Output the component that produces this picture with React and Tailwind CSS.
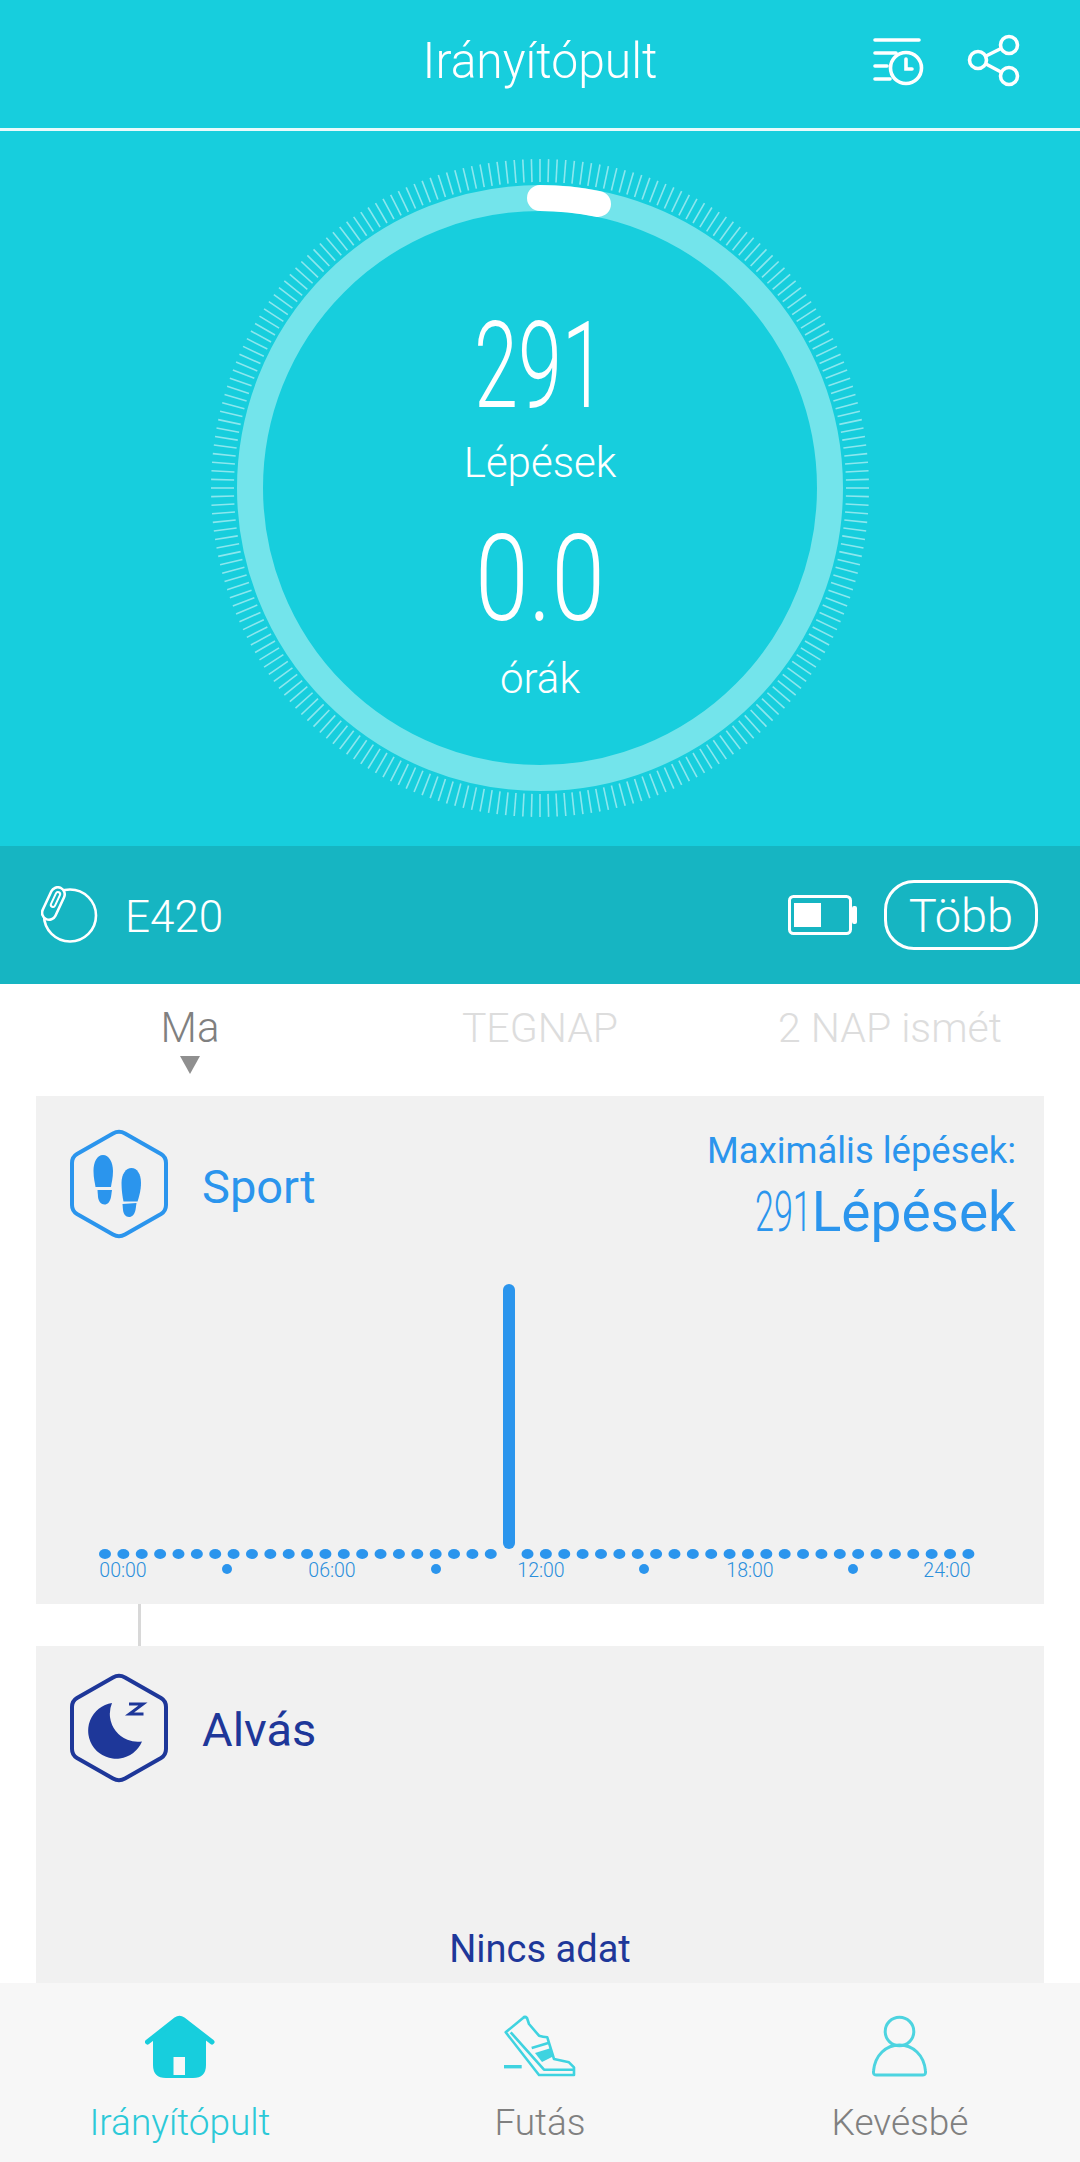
const ticks = Array.from({ length: 240 }, (_, i) => i * 1.5);
const dots = Array.from({ length: 48 }, (_, i) => i).filter((i) => i !== 22);
const hourDots = [227, 436, 644, 853];
const hourLabels = [
  ["00:00", 123],
  ["06:00", 332],
  ["12:00", 541],
  ["18:00", 750],
  ["24:00", 947],
];

const hexPath =
  "M43 4.5Q49 1 55 4.5L91 25Q96 28 96 34V76Q96 82 91 85L55 105.5Q49 109 43 105.5L7 85Q2 82 2 76V34Q2 28 7 25Z";

function Ring() {
  return (
    <svg width="660" height="660" viewBox="-330 -330 660 660" className="[grid-area:1/1]">
      {ticks.map((a) => (
        <line
          key={a}
          x1="0"
          y1="-306"
          x2="0"
          y2="-329"
          stroke="#ffffff"
          strokeOpacity="0.5"
          strokeWidth="1.6"
          transform={`rotate(${a})`}
        />
      ))}
      <circle r="290" fill="none" stroke="#73e4eb" strokeWidth="26" />
      <path
        d="M 0 -290 A 290 290 0 0 1 58 -284"
        fill="none"
        stroke="#ffffff"
        strokeWidth="26"
        strokeLinecap="round"
      />
    </svg>
  );
}

function HistoryIcon() {
  return (
    <svg width="52" height="52" viewBox="0 0 52 52" fill="none" stroke="#fff" strokeWidth="3.6" strokeLinecap="round">
      <path d="M2 5H46M2 18H23M2 31H14M2 44H17" />
      <circle cx="33" cy="33" r="15.5" />
      <path d="M33 24V34H39" />
    </svg>
  );
}

function ShareIcon() {
  return (
    <svg width="54" height="56" viewBox="0 0 54 56" fill="none" stroke="#fff" strokeWidth="3.6">
      <circle cx="43" cy="12" r="8.5" />
      <circle cx="12" cy="27" r="8.5" />
      <circle cx="43" cy="43" r="8.5" />
      <path d="M20 23L35 15.5M20 31L35 39" />
    </svg>
  );
}

function DeviceIcon() {
  return (
    <svg width="58" height="58" viewBox="0 0 58 58" fill="none" stroke="#fff" strokeWidth="2.6">
      <circle cx="29" cy="29.5" r="26" />
      <g transform="rotate(25 12.4 17.5)">
        <rect x="5.4" y="0.3" width="14" height="34.4" rx="7" fill="#16b5c2" />
        <rect x="10.4" y="5" width="4.4" height="16" rx="2.2" strokeWidth="2" />
      </g>
    </svg>
  );
}

function BatteryIcon() {
  return (
    <svg width="70" height="40" viewBox="0 0 70 40" fill="none">
      <rect x="1.5" y="1.5" width="61" height="37" rx="4" stroke="#fff" strokeWidth="3" />
      <rect x="6" y="8" width="27" height="24" fill="#fff" />
      <rect x="64" y="11" width="5" height="18" rx="2" fill="#fff" />
    </svg>
  );
}

function FeetIcon() {
  return (
    <svg width="98" height="110" viewBox="0 0 98 110" fill="none">
      <path d={hexPath} stroke="#2b95ed" strokeWidth="4" />
      <g fill="#2b95ed">
        <path d="M33 26C39 26 43 33 43 42C43 49 41.5 54 41 58H25.5C25 54 23.5 49 23.5 42C23.5 33 27 26 33 26Z" />
        <path d="M27.5 61H42L41 68C40 73 37.5 75.5 34.5 75.5C31 75.5 28.5 72.5 28 68Z" />
        <path d="M61.5 39C67 39 71 45 71 54C71 61 69 68 67.5 72.5H53.5C52.5 68 51.5 61 51.5 54C51.5 45 56 39 61.5 39Z" />
        <path d="M52.5 75L66.5 74L65.5 81C64.5 85.5 62 88 59 88C55.5 88 53.5 85 53 81Z" />
      </g>
    </svg>
  );
}

function MoonIcon() {
  return (
    <svg width="98" height="110" viewBox="0 0 98 110" fill="none">
      <path d={hexPath} stroke="#1e3799" strokeWidth="4" />
      <path d="M42 30A28 28 0 1 0 72 68.5A28 28 0 0 1 42 30Z" fill="#1e3799" />
      <path d="M59 31H73L59.5 41H73.5" stroke="#1e3799" strokeWidth="3" />
    </svg>
  );
}

function HomeIcon() {
  return (
    <svg width="70" height="64" viewBox="0 0 70 64" fill="none">
      <path
        fillRule="evenodd"
        fill="#17cedd"
        d="M8 24L34.5 4L61 24V50Q61 63 48 63H21Q8 63 8 50ZM28.5 42V60H40V42Z"
      />
      <path d="M2.5 27L31 4.5Q34.5 2 38 4.5L67 27" stroke="#17cedd" strokeWidth="5" strokeLinecap="round" />
    </svg>
  );
}

function ShoeIcon() {
  return (
    <svg width="72" height="64" viewBox="0 0 72 64" fill="none" stroke="#3fd3e0" strokeWidth="2.6" strokeLinejoin="round">
      <path d="M19 3Q21 1 23 3L25 9L35 20.7Q39 22 43.3 22.3L50 44L65 47.3L70 52.3V60H35L1.7 17.3Z" />
      <path d="M6.7 17.3L40 54.7H69" />
      <path d="M27.7 33L44.3 28" />
      <path d="M31 38L47 33L50 41L38 47Z" fill="#3fd3e0" stroke="none" />
      <path d="M0 51.7H17.7" strokeWidth="3.4" />
    </svg>
  );
}

function PersonIcon() {
  return (
    <svg width="58" height="64" viewBox="0 0 58 64" fill="none" stroke="#4dd4e0" strokeWidth="3">
      <circle cx="28.5" cy="16.5" r="14.3" />
      <path d="M5 60Q2 60 2.5 56C4 40 15 30 28.5 30C42 30 53 40 54.5 56Q55 60 52 60Z" />
    </svg>
  );
}

function SportChart() {
  return (
    <svg width="1008" height="370" viewBox="36 1234 1008 370" className="block">
      {dots.map((i) => (
        <ellipse key={i} cx={105 + i * 18.37} cy="1554" rx="6" ry="5" fill="#2b95ed" />
      ))}
      <rect x="503" y="1284" width="12" height="265" rx="6" fill="#2b95ed" />
      {hourDots.map((x) => (
        <circle key={x} cx={x} cy="1569" r="5" fill="#2b95ed" />
      ))}
      {hourLabels.map(([label, x]) => (
        <text key={label} x={x} y="1577" textAnchor="middle" fontSize="19.5" fontWeight="300" fill="#2b8fdc" fontFamily="Roboto, sans-serif">
          {label}
        </text>
      ))}
    </svg>
  );
}

export default function App() {
  return (
    <div className="flex h-[2162px] w-[1080px] flex-col overflow-hidden bg-white font-['Roboto',sans-serif]">
      <main className="min-h-0 flex-1 overflow-hidden">
        <header className="flex h-[128px] items-center justify-between bg-[#17cedd] pb-[7px] pl-[360px] pr-[60px]">
          <h1 className="w-[360px] text-center text-[50px] font-light leading-none text-white scale-x-[0.96]">Irányítópult</h1>
          <div className="flex items-center gap-[41px]">
            <HistoryIcon />
            <ShareIcon />
          </div>
        </header>
        <div className="h-[3px] bg-[#e8fbfc]" />

        <section className="flex h-[715px] justify-center bg-[#17cedd] pt-[27px]">
          <div className="grid h-[660px] w-[660px] justify-items-center">
            <Ring />
            <div className="flex flex-col items-center pt-[158px] text-white [grid-area:1/1]">
              <span className="h-[100px] text-[120px] font-light leading-[100px] scale-x-[0.66]">291</span>
              <span className="mt-[23px] h-[48px] text-[42px] font-light leading-[48px]">Lépések</span>
              <span className="mt-[42px] h-[100px] text-[120px] font-light leading-[100px] scale-x-[0.8]">0.0</span>
              <span className="mt-[26px] h-[48px] text-[42px] font-light leading-[48px]">órák</span>
            </div>
          </div>
        </section>

        <section className="flex h-[138px] items-center bg-[#16b5c2] pl-[41px] pr-[42px] text-white">
          <DeviceIcon />
          <span className="ml-[26px] flex-1 pt-[4px] text-[44px] font-light leading-none">E420</span>
          <BatteryIcon />
          <button className="ml-[26px] h-[70px] w-[154px] rounded-[30px] border-[3px] border-white text-[47px] font-light leading-none">
            Több
          </button>
        </section>

        <nav className="grid h-[112px] grid-cols-3 px-[15px] pt-[22px]">
          <div className="flex flex-col items-center">
            <span className="text-[42px] font-light leading-[44px] text-[#808080]">Ma</span>
            <span className="mt-[6px] h-0 w-0 border-x-[10px] border-t-[18px] border-x-transparent border-t-[#8f8f8f]" />
          </div>
          <span className="text-center text-[41px] font-light leading-[44px] text-[#dddddd]">TEGNAP</span>
          <span className="text-center text-[41px] font-light leading-[44px] text-[#dddddd]">2 NAP ismét</span>
        </nav>

        <section className="mx-[36px] h-[508px] bg-[#f1f1f1]">
          <div className="flex h-[138px] items-start justify-between pl-[34px] pr-[28px] pt-[33px]">
            <div className="flex items-center gap-[34px]">
              <FeetIcon />
              <span className="pt-[4px] text-[47px] leading-none text-[#2b95ed]">Sport</span>
            </div>
            <div className="flex flex-col items-end text-[#2b95ed]">
              <span className="text-[36.4px] leading-[44px]">Maximális lépések:</span>
              <span className="mt-[4px] flex items-baseline text-[55px] leading-[70px]">
                <span className="-mr-[35px] origin-left scale-x-[0.62] font-light">291</span>
                <span className="font-normal">Lépések</span>
              </span>
            </div>
          </div>
          <SportChart />
        </section>

        <div className="ml-[138px] h-[42px] w-[3px] bg-[#d8d8d8]" />

        <section className="mx-[36px] h-[400px] bg-[#f1f1f1]">
          <div className="flex items-center gap-[34px] pl-[34px] pt-[27px]">
            <MoonIcon />
            <span className="pt-[2px] text-[47px] leading-none text-[#1e3799]">Alvás</span>
          </div>
          <p className="mt-[147px] text-center text-[38px] leading-none text-[#1e3799]">Nincs adat</p>
        </section>
      </main>

      <footer className="grid h-[179px] shrink-0 grid-cols-3 bg-[#f7f7f7] pt-[32px]">
        <div className="flex flex-col items-center">
          <div className="flex h-[64px] items-center"><HomeIcon /></div>
          <span className="mt-[22px] text-[37px] font-light leading-[44px] text-[#2cc9d8]">Irányítópult</span>
        </div>
        <div className="flex flex-col items-center">
          <div className="flex h-[64px] items-center"><ShoeIcon /></div>
          <span className="mt-[22px] text-[37px] font-light leading-[44px] text-[#808080]">Futás</span>
        </div>
        <div className="flex flex-col items-center">
          <div className="flex h-[64px] items-center"><PersonIcon /></div>
          <span className="mt-[22px] text-[37px] font-light leading-[44px] text-[#808080]">Kevésbé</span>
        </div>
      </footer>
    </div>
  );
}
